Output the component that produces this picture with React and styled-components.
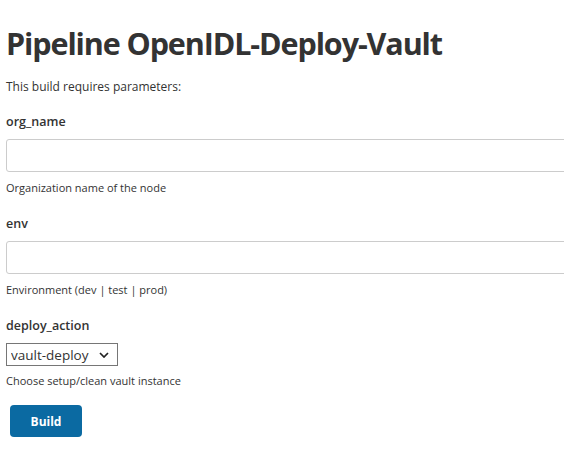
import React from "react";
import styled, { createGlobalStyle } from "styled-components";

const GlobalStyle = createGlobalStyle`
  html, body {
    margin: 0;
    padding: 0;
    background: #fff;
    overflow: hidden;
  }
  body {
    font-family: "Open Sans", "Noto Sans", sans-serif;
    color: #333;
  }
`;

const params = [
  { name: "org_name", type: "text", description: "Organization name of the node" },
  { name: "env", type: "text", description: "Environment (dev | test | prod)" },
  {
    name: "deploy_action",
    type: "choice",
    options: ["vault-deploy", "vault-setup", "vault-clean"],
    description: "Choose setup/clean vault instance",
  },
];

const App = () => {
  return (
    <Page>
      <GlobalStyle />
      <Title>Pipeline OpenIDL-Deploy-Vault</Title>
      <Intro>This build requires parameters:</Intro>
      <ParamList>
        {params.map((p) => (
          <Param key={p.name}>
            <ParamName>{p.name}</ParamName>
            {p.type === "choice" ? (
              <Select defaultValue={p.options[0]}>
                {p.options.map((o) => (
                  <option key={o}>{o}</option>
                ))}
              </Select>
            ) : (
              <TextInput type="text" />
            )}
            <Description $tight={p.type === "choice"}>{p.description}</Description>
          </Param>
        ))}
      </ParamList>
      <BuildButton>Build</BuildButton>
    </Page>
  );
};

const Page = styled.div`
  padding: 23px 0 0 6px;
`;

const Title = styled.h1`
  margin: 0;
  font-size: 30.5px;
  line-height: 40px;
  font-weight: 700;
  letter-spacing: -1.1px;
  color: #333;
  white-space: nowrap;
`;

const Intro = styled.p`
  margin: 15px 0 0;
  font-size: 12px;
  line-height: 18px;
`;

const ParamList = styled.div`
  display: flex;
  flex-direction: column;
  gap: 19px;
  margin-top: 17px;
`;

const Param = styled.div`
  display: flex;
  flex-direction: column;
  align-items: flex-start;
`;

const ParamName = styled.div`
  font-size: 12.5px;
  line-height: 18px;
  font-weight: 600;
  margin-bottom: 8px;
`;

const TextInput = styled.input`
  box-sizing: border-box;
  width: 620px;
  height: 33px;
  margin: 0;
  padding: 0 8px;
  border: 1px solid #ccc;
  border-radius: 3px;
  background: #fff;
  font: inherit;
  font-size: 13px;
  outline: none;
`;

const Select = styled.select`
  box-sizing: border-box;
  width: 112px;
  height: 23px;
  margin: 0;
  padding: 0 0 0 4px;
  border: 1px solid #767676;
  border-radius: 0;
  background: #fff
    url("data:image/svg+xml,%3Csvg xmlns='http://www.w3.org/2000/svg' width='10' height='6' viewBox='0 0 10 6'%3E%3Cpath d='M1 1l4 4 4-4' fill='none' stroke='%23222' stroke-width='1.7'/%3E%3C/svg%3E")
    no-repeat right 8px center;
  appearance: none;
  font-family: inherit;
  font-size: 13.5px;
  color: #333;
`;

const Description = styled.div`
  margin-top: ${(p) => (p.$tight ? "7px" : "8px")};
  font-size: 11px;
  line-height: 16px;
`;

const BuildButton = styled.button`
  display: block;
  box-sizing: border-box;
  width: 72px;
  height: 32px;
  margin: 16px 0 0 4px;
  padding: 0;
  border: none;
  border-radius: 4px;
  background: #0b6aa2;
  color: #fff;
  font-family: inherit;
  font-size: 12px;
  font-weight: 700;
  cursor: pointer;
`;

export default App;
